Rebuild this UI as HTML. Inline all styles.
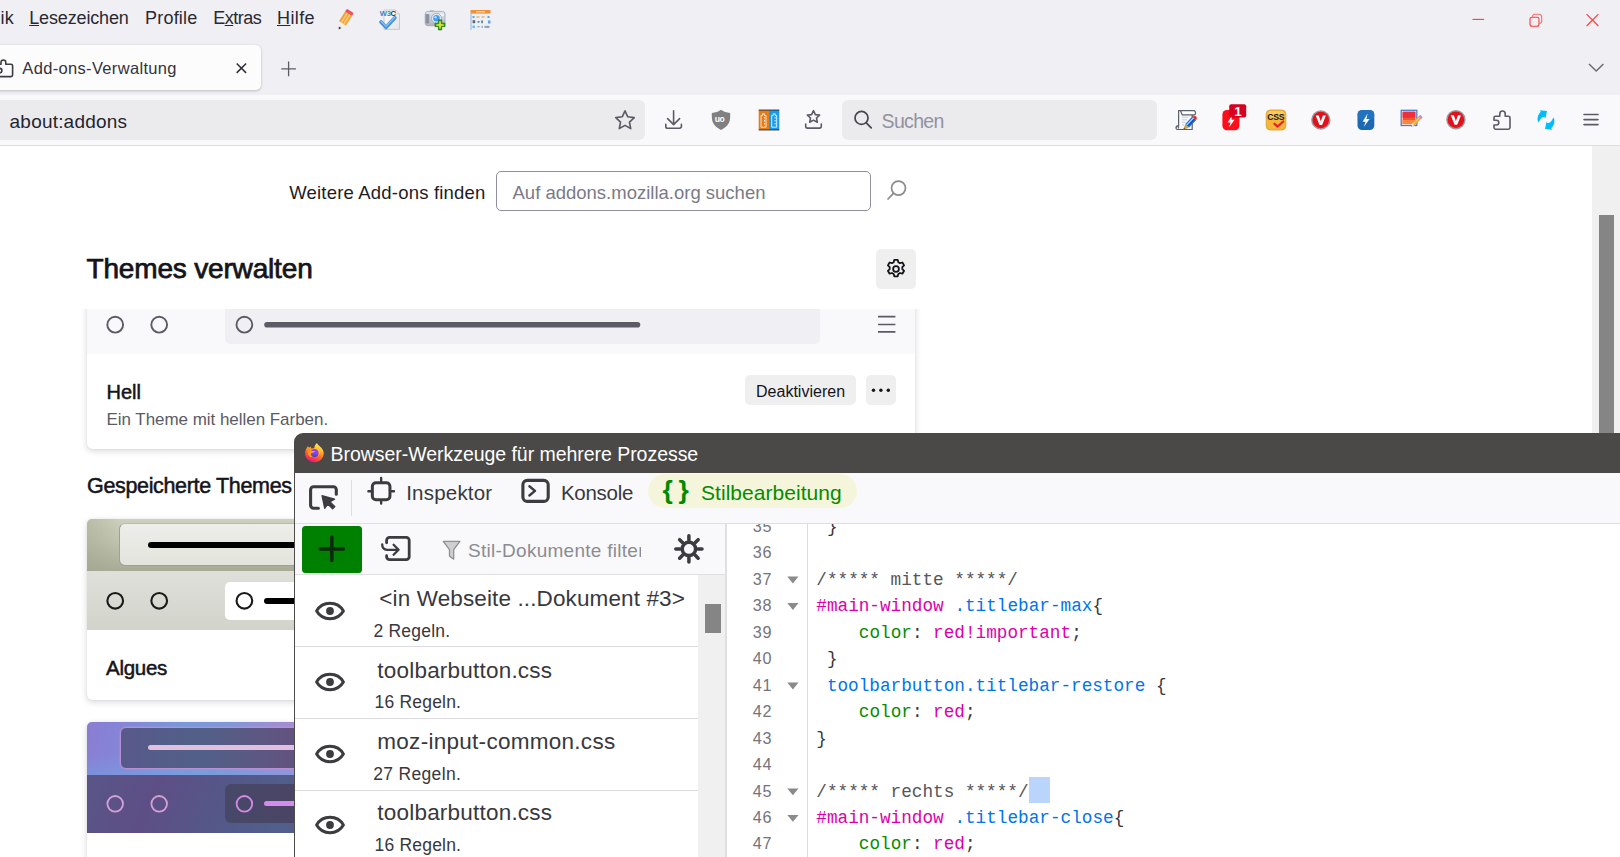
<!DOCTYPE html>
<html lang="de">
<head>
<meta charset="utf-8">
<title>Add-ons-Verwaltung</title>
<style>
html,body{margin:0;padding:0;}
body{width:1620px;height:857px;overflow:hidden;position:relative;background:#fff;font-family:"Liberation Sans",sans-serif;}
.a{position:absolute;}
.t{position:absolute;white-space:pre;line-height:1;}
svg{position:absolute;overflow:visible;}
/* browser chrome */
#titlebar{left:0;top:0;width:1620px;height:95px;background:#f0f0f4;}
#navbar{left:0;top:95px;width:1620px;height:50px;background:#f9f9fb;border-bottom:1px solid #dcdce1;}
#tab{left:-20px;top:45px;width:281px;height:45px;background:#fcfcfd;border-radius:5px;box-shadow:0 1px 3px rgba(0,0,0,.2),0 0 1px rgba(0,0,0,.14);}
#urlbar{left:-10px;top:100px;width:655px;height:40px;background:#ebebee;border-radius:6px;}
#searchbar{left:842px;top:100px;width:315px;height:40px;background:#ebebee;border-radius:6px;}
/* page */
#page{left:0;top:146px;width:1592px;height:711px;background:#fff;}
#vscroll{left:1592px;top:146px;width:28px;height:711px;background:#f0f0f0;}
#vthumb{left:1599px;top:215px;width:15px;height:230px;background:#858585;}
#amosearch{left:496px;top:171px;width:373px;height:38px;border:1px solid #8f8f9d;border-radius:5px;background:#fff;}
#gearbtn{left:876px;top:249px;width:40px;height:40px;background:#efeff0;border-radius:5px;}
.card{background:#fff;border-radius:5px;box-shadow:0 2px 6px rgba(58,57,68,.2),0 0 1px rgba(58,57,68,.22);overflow:hidden;}
#card1{left:87px;top:299px;width:828px;height:150px;}
#card2{left:87px;top:519px;width:828px;height:181px;}
#card3{left:87px;top:722px;width:828px;height:181px;}
.btn{background:#efeff0;border-radius:5px;}
/* devtools */
#dt{left:294px;top:433px;width:1340px;height:440px;background:#fff;border-radius:9px 0 0 0;overflow:hidden;}
#dttitle{left:0;top:0;width:1340px;height:40px;background:#4a4947;}
#dttabs{left:0;top:40px;width:1340px;height:50px;background:#f9f9fb;border-bottom:1px solid #dfdfe2;}
#stilpill{left:354px;top:41px;width:209px;height:34px;border-radius:17px;background:#f5f5dc;}
#sbtools{left:0;top:91px;width:431px;height:50px;background:#f9f9fb;border-bottom:1px solid #e0e0e2;}
#plusbtn{left:8px;top:93px;width:60px;height:47px;background:#008000;border-radius:3.500px;}
#sblist{left:0;top:142px;width:404px;height:300px;background:#fff;}
.row{left:0;width:404px;height:71px;border-bottom:1px solid #dcdcde;}
#sbscroll{left:404px;top:142px;width:27px;height:300px;background:#f0f0f0;}
#sbthumb{left:411px;top:171px;width:16px;height:29px;background:#858585;}
#splitter{left:431px;top:91px;width:2px;height:350px;background:#e0e0e2;}
#gutter{left:433px;top:91px;width:80px;height:350px;background:#fff;border-right:1px solid #dcdcde;}
#sel{left:735px;top:344px;width:21px;height:26px;background:#b9d5fb;}
</style>
</head>
<body>
<!-- ===== browser chrome ===== -->
<div class="a" id="titlebar"></div>
<div class="a" id="navbar"></div>
<div class="a" id="tab"></div>
<div class="a" id="urlbar"></div>
<div class="a" id="searchbar"></div>
<!-- menu-bar extension icons -->
<svg style="left:335px;top:9px" width="20" height="22" viewBox="0 0 20 22">
  <g transform="translate(-.2 -.3) rotate(32 10 11) translate(10 11) scale(1.12) translate(-10 -11.400)">
    <rect x="6.3" y="2.2" width="7.4" height="3.2" rx="1" fill="#e9545f"/>
    <rect x="6.3" y="5.2" width="7.4" height="10.2" fill="#f0a63e"/>
    <rect x="8.2" y="5.2" width="1.2" height="10.2" fill="#f6c878"/>
    <rect x="10.7" y="5.2" width="1.2" height="10.2" fill="#f6c878"/>
    <path d="M6.3 15.4h7.4L10 21.6z" fill="#f4efe6"/>
    <path d="M8.7 19.3h2.6L10 21.8z" fill="#3a3a3a"/>
  </g>
</svg>
<svg style="left:379px;top:9px" width="22" height="22" viewBox="0 0 22 22">
  <defs><linearGradient id="pg1" x1="0" y1="0" x2="1" y2="1"><stop offset="0" stop-color="#fff"/><stop offset="1" stop-color="#e4e4e6"/></linearGradient></defs>
  <path d="M5 1h11.500l4 3.800v15.600H5z" fill="url(#pg1)" stroke="#c4c4c8" stroke-width=".9"/>
  <path d="M16.500 1v3.800h4" fill="#ececee" stroke="#c4c4c8" stroke-width=".7"/>
  <text x=".7" y="6.700" font-family="'Liberation Sans',sans-serif" font-weight="700" font-size="7.600" fill="#3a86c9" letter-spacing="-.2">W3</text>
  <text x="11.500" y="6.700" font-family="'Liberation Sans',sans-serif" font-weight="700" font-size="7.600" fill="#333">C</text>
  <path d="M2 13l5.100 5.300 8.800-9.500" fill="none" stroke="#4a92db" stroke-width="3.700" stroke-linecap="round" stroke-linejoin="round"/>
  <path d="M2.200 12.500l4.900 4.800 8.500-9" fill="none" stroke="#86bdee" stroke-width="1.300" stroke-linecap="round" stroke-linejoin="round"/>
</svg>
<svg style="left:424px;top:9px" width="22" height="22" viewBox="0 0 22 22">
  <defs><linearGradient id="cam1" x1="0" y1="0" x2="0" y2="1"><stop offset="0" stop-color="#e3e6ec"/><stop offset=".55" stop-color="#c9ccd6"/><stop offset="1" stop-color="#aeb2bf"/></linearGradient></defs>
  <rect x="5.600" y=".9" width="4.600" height="3" rx="1" fill="#c2c5cf"/>
  <rect x="1.200" y="2.400" width="19.800" height="14.300" rx="2.600" fill="url(#cam1)" stroke="#a0a4b2" stroke-width=".8"/>
  <rect x="1.500" y="5" width="3.800" height="9.500" rx="1" fill="#8d92a3"/>
  <rect x="15.500" y="4.600" width="4.300" height="2.600" fill="#f1f3f7"/>
  <circle cx="12.500" cy="9.300" r="5" fill="#e6ebf3" stroke="#9aa0b0" stroke-width=".8"/>
  <circle cx="12.500" cy="9.300" r="3.300" fill="#3f9cef"/>
  <circle cx="11.500" cy="8.200" r="1.200" fill="#b5dcfb"/>
  <path d="M14.400 10.900h3.300v3.300H21v3.400h-3.300v3.300h-3.300v-3.300H11v-3.400h3.400z" fill="#32991c" stroke="#23780e" stroke-width=".8" stroke-linejoin="round"/>
  <path d="M16.050 12.300v7.300M12.400 15.900h7.300" stroke="#e6ee35" stroke-width="1.500"/>
</svg>
<svg style="left:470px;top:9px" width="22" height="22" viewBox="0 0 22 22">
  <rect x=".5" y="1" width="20" height="20" fill="#e9f1fb"/>
  <rect x=".5" y="1" width="20" height="3.6" fill="#f0913a"/>
  <rect x="6" y="2.2" width="9" height="1.2" fill="#fbd9b5"/>
  <rect x=".5" y="4.6" width="1" height="16.4" fill="#8fb5e6"/>
  <g fill="#6d9fe0"><rect x="2.5" y="7" width="2" height="2"/><rect x="17.5" y="7" width="2" height="2"/><rect x="18" y="11.5" width="2.5" height="3"/><rect x="2.5" y="16.5" width="2.4" height="2.6" fill="#7fb3ee"/></g>
  <g fill="#f3b56e"><rect x="6.5" y="7.2" width="3" height="1.6"/><rect x="11.5" y="7.2" width="3" height="1.6"/></g>
  <g fill="#5d6470"><rect x="2.6" y="11.2" width="2.6" height="3"/><rect x="7.5" y="12.2" width="2" height="1.4"/><rect x="11.3" y="11.4" width="1.5" height="2.8"/></g>
  <g fill="#9aa3b3"><rect x="7.5" y="17" width="2" height="1.4"/><rect x="11.5" y="16.8" width="1.4" height="2"/><rect x="14.5" y="16.8" width="5" height="2.2"/></g>
</svg>

<!-- window controls -->
<svg style="left:1460px;top:6px" width="150" height="28" viewBox="0 0 150 28" fill="none" stroke="#ff3a3a" stroke-width="1.1">
  <path d="M12.5 13.4h11.6"/>
  <rect x="70" y="11.3" width="9" height="9" rx="2"/>
  <path d="M72.5 11.3v-.8a2.2 2.2 0 0 1 2.2-2.2h4a3 3 0 0 1 3 3v4a2.2 2.2 0 0 1-2.2 2.2h-.5" stroke="#ff6a6a"/>
  <path d="M126.6 8.2l11.8 11.8M138.4 8.2l-11.8 11.8"/>
</svg>
<!-- tabs-list chevron -->
<svg style="left:1586px;top:60px" width="20" height="14" viewBox="0 0 20 14" fill="none" stroke="#6a6a73" stroke-width="1.5">
  <path d="M3 4l7.2 7L17.4 4"/>
</svg>

<!-- tab: puzzle favicon, close, new tab -->
<svg style="left:-8px;top:57px" width="24" height="22" viewBox="0 0 24 22" fill="none" stroke="#3c3c44" stroke-width="1.6" stroke-linejoin="round">
  <path d="M3 7.2h6V5.4a2.4 2.4 0 0 1 4.8 0v1.8h5.2a1.6 1.6 0 0 1 1.6 1.6V18a1.6 1.6 0 0 1-1.6 1.6H3"/>
  <path d="M4 11.3h3.6a2.3 2.3 0 0 1 0 4.6H4"/>
</svg>
<svg style="left:234px;top:61px" width="14" height="14" viewBox="0 0 14 14" fill="none" stroke="#2f2f37" stroke-width="1.5">
  <path d="M2.7 2.5l9.4 9.4M12.1 2.5l-9.4 9.4"/>
</svg>
<svg style="left:280px;top:60px" width="18" height="18" viewBox="0 0 18 18" fill="none" stroke="#5b5b66" stroke-width="1.3">
  <path d="M8.6 1.6v14.6M1.3 8.9h14.6"/>
</svg>

<!-- urlbar star -->
<svg style="left:613px;top:108px" width="24" height="24" viewBox="0 0 24 24" fill="none" stroke="#5b5b66" stroke-width="1.6" stroke-linejoin="round">
  <path d="M12 3.6l2.55 5.5 5.95.75-4.4 4.1 1.15 5.95L12 16.95 6.75 19.9l1.15-5.95-4.4-4.1 5.95-.75z" transform="translate(12 12.3) scale(1.09) translate(-12 -12.3)" stroke-width="1.5"/>
</svg>
<!-- downloads -->
<svg style="left:662px;top:108px" width="24" height="24" viewBox="0 0 24 24" fill="none" stroke="#5b5b66" stroke-width="1.6" stroke-linecap="round" stroke-linejoin="round">
  <path d="M11.6 2.8v13M5.6 10.6l6 6 6-6"/>
  <path d="M3.8 16.2v2.2a1.8 1.8 0 0 0 1.8 1.8h12a1.8 1.8 0 0 0 1.8-1.8v-2.2"/>
</svg>
<!-- uBlock shield -->
<svg style="left:710px;top:108px" width="22" height="24" viewBox="0 0 22 24">
  <path d="M11 1.8c-2.6 1.9-5.6 2.9-9.2 3.1 0 3.400-.2 7.200 1.500 10.400 1.500 2.900 4.200 5 7.700 6.700 3.500-1.700 6.200-3.800 7.700-6.700 1.700-3.200 1.500-7 1.500-10.400-3.600-.2-6.600-1.200-9.200-3.100z" fill="#808080"/>
  <text x="4.7" y="14.4" font-family="'Liberation Sans',sans-serif" font-weight="700" font-size="8.6" fill="#fff" letter-spacing="-.5">uo</text>
</svg>
<!-- orange / blue containers icon -->
<svg style="left:758px;top:109px" width="22" height="22" viewBox="0 0 22 22">
  <rect x=".7" y="1" width="10.3" height="20" fill="#e37d1b"/>
  <rect x="11" y="1" width="10.3" height="20" fill="#1c9bea"/>
  <rect x=".7" y=".6" width="20.600" height=".9" fill="#2a2a2a"/><rect x=".7" y="20.500" width="20.600" height=".9" fill="#2a2a2a"/>
  <g fill="none" stroke="#fbe3c9" stroke-width="1"><path d="M3 6.500h1.500V4.800h2V6.500H8v11.700H3z"/></g>
  <g fill="none" stroke="#d6efff" stroke-width="1"><path d="M13.700 6.500h1.500V4.800h2V6.500h1.500v11.700h-5z"/></g>
  <g fill="#fff" opacity=".85"><rect x="6" y="8" width="1" height="1.500"/><rect x="6" y="11" width="1" height="1.500"/><rect x="6" y="14" width="1" height="1.500"/><rect x="16.600" y="8" width="1" height="1.500"/><rect x="16.600" y="11" width="1" height="1.500"/><rect x="16.600" y="14" width="1" height="1.500"/></g>
</svg>
<!-- bookmarks (star in tray) -->
<svg style="left:802px;top:108px" width="24" height="24" viewBox="0 0 24 24" fill="none" stroke="#5b5b66" stroke-width="1.6" stroke-linecap="round" stroke-linejoin="round">
  <path d="M11.500 2.700l1.850 3.900 4.250.5-3.100 2.900.8 4.200-3.800-2.100-3.800 2.100.8-4.200-3.100-2.900 4.250-.5z"/>
  <path d="M3.700 16v2.300a1.800 1.800 0 0 0 1.800 1.800h12a1.800 1.800 0 0 0 1.800-1.800V16"/>
</svg>
<!-- search glass -->
<svg style="left:850px;top:108px" width="26" height="26" viewBox="0 0 26 26" fill="none" stroke="#45454d" stroke-width="1.7" stroke-linecap="round">
  <circle cx="11.500" cy="9.900" r="6.500"/><path d="M16.300 14.800l4.900 5.100"/>
</svg>

<!-- right-hand toolbar icons -->
<svg style="left:1170px;top:104px" width="32" height="32" viewBox="0 0 32 32">
  <path d="M8.600 6.600h15.500v4.300h-1.900v14.600H7.200c-.8-.2-1.200-1-1.200-1.900 0-1.200.8-2.100 2.600-2.100z" fill="#f7f8fb" stroke="#5b616b" stroke-width="1.200" stroke-linejoin="round"/>
  <path d="M10.400 6.600l1.900 4.300h12.100c1.400-.3 1.700-3.600-.3-4.300z" fill="#fff" stroke="#5b616b" stroke-width="1.200" stroke-linejoin="round"/>
  <path d="M6.300 24.300c.3-1.600 1.300-2.300 2.300-2.300v2.600" fill="#d9dde4" stroke="#5b616b" stroke-width="1"/>
  <g stroke="#c3c9d6" stroke-width=".9"><path d="M12 13.200h6M12 15.800h5M12 18.300h3M12 20.900h2"/></g>
  <path d="M15.300 20l7-7.400 3.700 3.600-7 7.400z" fill="#1f6fe0"/>
  <path d="M16.900 21.500l7-7.400 1.100 1.100-7 7.400z" fill="#1048b8"/>
  <path d="M16.200 20.700l7-7.400.9.900-7 7.400z" fill="#9fdcff"/>
  <path d="M22.300 12.600c1-1.200 2.500-1.300 3.600-.3 1.100 1 1.200 2.700.1 3.900z" fill="#e8261f"/>
  <path d="M23 12.300c.8-.7 1.800-.7 2.500-.2" stroke="#f6a09a" stroke-width=".9" fill="none"/>
  <path d="M15.300 20l3.700 3.600-5.800 2.300z" fill="#d0a03a"/>
  <path d="M14.100 23.800l1.300 1.300-2.400.9z" fill="#5a4312"/>
</svg>
<svg style="left:1221px;top:102px" width="28" height="30" viewBox="0 0 28 30">
  <rect x="1.400" y="8" width="17" height="20.200" rx="4.500" fill="#fa0f1b"/>
  <path d="M11.700 12.500l-5.200 8h3.100l-1.700 5 5.700-7.700h-3.200z" fill="#fff"/>
  <rect x="8.200" y="2.200" width="17" height="13.400" rx="2" fill="#d70022"/>
  <text x="13.300" y="14.200" font-family="'Liberation Sans',sans-serif" font-weight="700" font-size="13.500" fill="#fff">1</text>
</svg>
<svg style="left:1265px;top:109px" width="22" height="22" viewBox="0 0 22 22">
  <rect x="1.200" y="1" width="19.600" height="20" rx="4" fill="#f6b63a" stroke="#d99a25" stroke-width=".8"/>
  <rect x="2.500" y="2" width="17" height="6" rx="3" fill="#fbd36f" opacity=".7"/>
  <text x="2.300" y="10.600" font-family="'Liberation Sans',sans-serif" font-weight="700" font-size="8.600" fill="#1b1508" letter-spacing="-.3">CSS</text>
  <path d="M9.500 14.800l3.200 2.700 5.500-5" fill="none" stroke="#e0262b" stroke-width="2.300" stroke-linecap="round" stroke-linejoin="round"/>
</svg>
<svg style="left:1309px;top:108px" width="24" height="24" viewBox="0 0 24 24">
  <circle cx="11.800" cy="12" r="9.700" fill="#9b9b9b"/>
  <circle cx="11.800" cy="12" r="8.300" fill="#e3111c"/>
  <path d="M6.700 7.600h3l2.100 5.600 2.100-5.600h3L13.100 17h-2.600z" fill="#fff"/>
</svg>
<svg style="left:1356px;top:109px" width="20" height="22" viewBox="0 0 20 22">
  <rect x="1.500" y="1" width="16.800" height="20" rx="4.500" fill="#1c69b3"/>
  <rect x="1.500" y="1" width="16.800" height="10" rx="4.500" fill="#2a7ac6" opacity=".6"/>
  <path d="M11.600 4.500l-5 8.200h3l-1.900 5.200 5.900-7.900h-3.200z" fill="#fff"/>
</svg>
<svg style="left:1399px;top:108px" width="26" height="24" viewBox="0 0 26 24">
  <rect x="2.200" y="2.300" width="15.600" height="15.200" fill="#fff" stroke="#4d7cc9" stroke-width="1.300"/>
  <rect x="3.600" y="3.700" width="12.800" height="12.400" fill="#f2542d"/>
  <rect x="3.600" y="3.700" width="12.800" height="6" fill="#ee2f3a"/>
  <rect x="3.600" y="12" width="12.800" height="4.100" fill="#f6893a"/>
  <g transform="rotate(45 16 14.500)">
    <rect x="14.200" y="5.300" width="3.600" height="2.800" rx=".8" fill="#c98ad6"/>
    <rect x="14.200" y="7.800" width="3.600" height="9" fill="#f2a23a"/>
    <rect x="15.300" y="7.800" width="1" height="9" fill="#f8cc80"/>
    <path d="M14.200 16.800h3.600l-1.800 3.500z" fill="#f4e3c3"/>
    <path d="M15.400 19h1.200l-.6 1.400z" fill="#444"/>
  </g>
</svg>
<svg style="left:1444px;top:108px" width="24" height="24" viewBox="0 0 24 24">
  <circle cx="11.900" cy="11.700" r="9.700" fill="#9b9b9b"/>
  <circle cx="11.900" cy="11.700" r="8.300" fill="#e3111c"/>
  <path d="M6.800 7.300h3l2.100 5.600 2.100-5.600h3l-3.800 9.400h-2.600z" fill="#fff"/>
</svg>
<!-- extensions puzzle -->
<svg style="left:1490px;top:108px" width="24" height="24" viewBox="0 0 24 24" fill="none" stroke="#5b5b66" stroke-width="1.600" stroke-linejoin="round">
  <path d="M6 21.200h12.400a1.600 1.600 0 0 0 1.600-1.600V9.800a1.600 1.600 0 0 0-1.600-1.600h-3.200V5.700a2.700 2.700 0 0 0-5.400 0v2.500H5.600A1.600 1.600 0 0 0 4 9.800v2.400h2.400a2.400 2.400 0 0 1 0 4.800H4v2.600a1.600 1.600 0 0 0 1.600 1.600z"/>
</svg>
<!-- sync arrows -->
<svg style="left:1530px;top:104px" width="32" height="32" viewBox="0 0 32 32" fill="#02bdfb">
  <path id="syA" d="M8.400 18.600C7 16 7.200 12.200 9.900 8.800l.9-1.100-.9-1.500L17 7.100l-1.500 7.100-.8-1.100c-1.700-.700-3.700.500-5 3.300z"/>
  <path d="M8.400 18.600C7 16 7.200 12.200 9.900 8.800l.9-1.100-.9-1.500L17 7.100l-1.500 7.100-.8-1.100c-1.700-.700-3.700.500-5 3.300z" transform="rotate(180 16 16)"/>
</svg>
<!-- app menu -->
<svg style="left:1582px;top:112px" width="18" height="16" viewBox="0 0 18 16" fill="none" stroke="#5b5b66" stroke-width="1.600" stroke-linecap="round">
  <path d="M2 2.500h14M2 7.600h14M2 12.600h14"/>
</svg>


<!-- ===== about:addons page ===== -->
<div class="a" id="page"></div>
<div class="a" id="vscroll"></div>
<div class="a" id="vthumb"></div>
<div class="a" id="amosearch"></div>
<div class="a" id="gearbtn"></div>
<div class="a card" id="card1">
  <div class="a" style="left:0;top:0;width:828px;height:55px;background:#f9f9fb;"></div>
  <div class="a" style="left:138px;top:0;width:595px;height:45px;background:#f0f0f4;border-radius:5px;"></div>
</div>
<div class="a" style="left:70px;top:290px;width:870px;height:19px;background:#fff;"></div>
<div class="a btn" style="left:745px;top:375px;width:111px;height:30px;"></div>
<div class="a btn" style="left:866px;top:375px;width:30px;height:30px;"></div>
<div class="a card" id="card2">
  <div class="a" style="left:0;top:0;width:828px;height:52px;background:linear-gradient(180deg,#cdd0bc 0%,#c0c3ae 45%,#a8ab96 100%);"></div>
  <div class="a" style="left:0;top:0;width:34px;height:52px;background:linear-gradient(90deg,rgba(160,163,140,.45),rgba(160,163,140,0));"></div>
  <div class="a" style="left:32px;top:4px;width:500px;height:43px;background:linear-gradient(180deg,#edeee9,#e3e4dd);border:1px solid #9fa195;border-top-color:#b9bbad;border-radius:6px;box-sizing:border-box;"></div>
  <div class="a" style="left:61px;top:23px;width:400px;height:5.600px;border-radius:3px;background:#000;"></div>
  <div class="a" style="left:0;top:52px;width:828px;height:58.500px;background:linear-gradient(180deg,#dfe0d9,#d2d3cb);"></div>
  <div class="a" style="left:138px;top:62.500px;width:500px;height:38.500px;background:#fff;border-radius:5px;"></div>
  <div class="a" style="left:177px;top:79px;width:300px;height:5.600px;border-radius:3px;background:#000;"></div>
</div>
<div class="a card" id="card3">
  <div class="a" style="left:0;top:0;width:828px;height:52.500px;background:linear-gradient(97deg,#8a7dd2 0px,#8486d7 38px,#789ad9 100px,#7f97d8 140px,#9a8fd4 185px,#b08ad2 225px);"></div>
  <div class="a" style="left:0;top:0;width:250px;height:52.500px;background:linear-gradient(180deg,rgba(122,160,222,0) 60%,rgba(118,160,225,.55) 100%);"></div>
  <div class="a" style="left:33px;top:5px;width:500px;height:41.500px;background:linear-gradient(90deg,#58598a 0%,#516087 45%,#63527f 100%);background-size:176px 100%;background-repeat:repeat-x;border:1px solid #b98fd4;border-radius:6px;box-sizing:border-box;box-shadow:0 0 2px rgba(215,150,230,.7);"></div>
  <div class="a" style="left:61px;top:23.300px;width:400px;height:4.900px;border-radius:3px;background:#dfc0de;"></div>
  <div class="a" style="left:0;top:52.500px;width:828px;height:58.300px;background:linear-gradient(115deg,#595587 0%,#5d4f86 22%,#525a89 50%,#505f8b 62%,#5c588a 100%);background-size:320px 100%;"></div>
  <div class="a" style="left:138px;top:62px;width:500px;height:39.200px;background:linear-gradient(90deg,#474868,#4b4465 80px);border-radius:6px;"></div>
  <div class="a" style="left:177px;top:79.400px;width:300px;height:4.800px;border-radius:3px;background:#d68bea;"></div>
</div>
<!-- AMO search glass -->
<svg style="left:884px;top:176px" width="26" height="28" viewBox="0 0 26 28" fill="none" stroke="#8a8a8f" stroke-width="1.700" stroke-linecap="round">
  <circle cx="14.500" cy="12.100" r="7"/><path d="M9.400 17.400l-5.400 5.600"/>
</svg>
<!-- gear in button -->
<svg style="left:884px;top:257px" width="24" height="24" viewBox="0 0 24 24" fill="none" stroke="#15141a" stroke-width="1.800" stroke-linejoin="round">
  <path d="M10.300 2.800h3.400l.6 2.400 1.700 1 2.400-.7 1.700 2.900-1.800 1.700v2l1.800 1.700-1.700 2.900-2.400-.7-1.700 1-.6 2.400h-3.400l-.6-2.400-1.700-1-2.400.7-1.700-2.900 1.800-1.700v-2L3.900 8.400l1.700-2.900 2.400.7 1.700-1z" stroke-linejoin="round"/>
  <circle cx="12" cy="12" r="2.900"/>
</svg>
<!-- card 1 (Hell) preview -->
<svg style="left:87px;top:309px" width="828" height="45" viewBox="0 0 828 45" fill="none" stroke="#5b5b66" stroke-width="1.900">
  <circle cx="28.200" cy="15.700" r="7.900"/><circle cx="72.200" cy="15.700" r="7.900"/><circle cx="157.400" cy="15.700" r="7.900"/>
  <path d="M180 15.700h370.500" stroke-width="5.600" stroke-linecap="round"/>
  <path d="M791 7.700h17.400M791 15.500h17.400M791 22.900h17.400" stroke-width="1.700"/>
</svg>
<!-- more (...) dots -->
<svg style="left:866px;top:375px" width="30" height="30" viewBox="0 0 30 30" fill="#15141a">
  <circle cx="7.500" cy="15.200" r="1.700"/><circle cx="14.900" cy="15.200" r="1.700"/><circle cx="22.300" cy="15.200" r="1.700"/>
</svg>
<!-- card 2 (Algues) circles -->
<svg style="left:87px;top:571px" width="300" height="58" viewBox="0 0 300 58" fill="none" stroke="#1a1a1a" stroke-width="2.100">
  <circle cx="28.200" cy="29.800" r="7.850"/><circle cx="72.200" cy="29.800" r="7.850"/><circle cx="157.400" cy="29.800" r="7.850"/>
</svg>
<!-- card 3 (Alpenglow) circles -->
<svg style="left:87px;top:775px" width="300" height="58" viewBox="0 0 300 58" fill="none" stroke="#d4a0d8" stroke-width="1.800">
  <circle cx="28.200" cy="28.800" r="7.800"/><circle cx="72.200" cy="28.800" r="7.800"/><circle cx="157.400" cy="28.800" r="7.800" stroke="#d58ae3"/>
</svg>


<!-- ===== devtools window ===== -->
<div class="a" id="dt">
  <div class="a" id="dttitle"></div>
  <div class="a" id="dttabs"></div>
  <div class="a" id="stilpill"></div>
  <div class="a" id="sbtools"></div>
  <div class="a" id="plusbtn"></div>
  <div class="a" id="sblist">
    <div class="a row" style="top:0;"></div>
    <div class="a row" style="top:72px;"></div>
    <div class="a row" style="top:144px;"></div>
    <div class="a row" style="top:216px;"></div>
  </div>
  <div class="a" id="sbscroll"></div>
  <div class="a" id="sbthumb"></div>
  <div class="a" id="splitter"></div>
  <div class="a" id="gutter"></div>
  <div class="a" id="sel"></div>
  <!-- firefox logo -->
<svg style="left:10.600px;top:9.800px" width="20" height="20" viewBox="0 0 20 20">
  <defs>
    <linearGradient id="ffg" x1=".8" y1="0" x2=".35" y2="1"><stop offset="0" stop-color="#fff36b"/><stop offset=".28" stop-color="#ffc532"/><stop offset=".55" stop-color="#ff7d22"/><stop offset=".8" stop-color="#ff3b45"/><stop offset="1" stop-color="#e3148c"/></linearGradient>
    <linearGradient id="ffp" x1=".5" y1="0" x2=".4" y2="1"><stop offset="0" stop-color="#b336e4"/><stop offset=".5" stop-color="#7b4cf0"/><stop offset="1" stop-color="#4a3cc4"/></linearGradient>
    <linearGradient id="ffo" x1="0" y1="0" x2="1" y2="1"><stop offset="0" stop-color="#ff8a16"/><stop offset="1" stop-color="#ffb52a"/></linearGradient>
  </defs>
  <path d="M11.900 0c1 1.700 2.300 2.700 3.600 3.900 1.900 1.700 3.200 3.900 3.200 6.400 0 5-4.100 9-9.300 9S.1 15.400.1 10.500c0-2.200.6-4.300 1.700-5.800l.9-1.500 1.500 1.500 1.300-1.200 1.200 2.200c.8-.3 1.700-.4 2.500-.3C9.200 3.400 10.300 1.400 11.900 0z" fill="url(#ffg)"/>
  <circle cx="9.500" cy="9.900" r="4" fill="url(#ffp)"/>
  <path d="M2.300 7.200c1.300-.5 2.800-.2 3.900.4.900.5 1.800.5 2.900.5.700 0 .9.500.3.800-1.400.6-2.800.7-3.400 1.700-.7 1.200.2 2.700 1.600 3.300-2.500.4-5-1.300-5.300-6.700z" fill="url(#ffo)"/>
  <path d="M11.400 5.800c1.600.7 2.700 2.200 2.700 4.100 0 .9-.3 1.800-.8 2.500 1.800-1.400 2-4.500-.100-6.500-.5-.4-1.100-.3-1.800-.1z" fill="#ffd23a" opacity=".9"/>
</svg>
<!-- element picker -->
<svg style="left:14px;top:51px" width="32" height="28" viewBox="0 0 32 28" fill="none" stroke="#3b3b40" stroke-width="3.100" stroke-linecap="round" stroke-linejoin="round">
  <path d="M10.400 24.200H5.600a3 3 0 0 1-3-3V5.800a3 3 0 0 1 3-3h19.700a3 3 0 0 1 3 3v4.400"/>
  <path d="M14 11.600l2.700 12.800 3.100-4.300 4.800 4.800 2.300-2.300-4.800-4.800 4.500-2.600z" fill="#3b3b40" stroke-width="1.200"/>
</svg>
<div class="a" style="left:57px;top:47px;width:1px;height:36px;background:#dedee1;"></div>
<!-- inspector -->
<svg style="left:72px;top:42px" width="30" height="32" viewBox="0 0 30 32" fill="none" stroke="#3b3b40" stroke-width="3" stroke-linecap="round">
  <rect x="6.350" y="7.650" width="17.600" height="17.200" rx="3.600"/>
  <path d="M15.150 3v3.400M15.150 25.600v3M2.400 16.200h3.400M24.600 16.200h3.400" stroke-width="2.400"/>
</svg>
<!-- console -->
<svg style="left:226px;top:44px" width="32" height="28" viewBox="0 0 32 28" fill="none" stroke="#3b3b40" stroke-width="3.100" stroke-linecap="round" stroke-linejoin="round">
  <rect x="2.900" y="3.400" width="25.300" height="21" rx="4.400"/>
  <path d="M9.400 9.300l5.600 4.600-5.600 4.600" stroke-width="2.400"/>
</svg>
<!-- plus glyph -->
<svg style="left:8px;top:93px" width="60" height="47" viewBox="0 0 60 47" fill="none" stroke="#0b2c0b" stroke-width="3.600" stroke-linecap="round">
  <path d="M29.800 11.300v23.200M18.200 22.900h23.200"/>
</svg>
<!-- import -->
<svg style="left:85px;top:101px" width="34" height="30" viewBox="0 0 34 30" fill="none" stroke="#3b3b40" stroke-width="2.800" stroke-linecap="round" stroke-linejoin="round">
  <path d="M7.600 8.800V6.300a3 3 0 0 1 3-3h16.600a3 3 0 0 1 3 3v16.400a3 3 0 0 1-3 3H10.600a3 3 0 0 1-3-3v-1" />
  <path d="M3.200 10.300c0 3.500 1.600 5.500 5 5.500h11.200M14.600 10.800l5 5-5 5" stroke-width="2.300"/>
</svg>
<!-- filter funnel -->
<svg style="left:147px;top:106px" width="22" height="24" viewBox="0 0 22 24">
  <path d="M2.300 2.400h16.600l-6.200 8.300v9.400l-4.200-2.900v-6.500z" fill="#cfcfd2" stroke="#8f8f94" stroke-width="1.300" stroke-linejoin="round"/>
</svg>
<!-- options gear (sun shaped) -->
<svg style="left:379px;top:100px" width="32" height="32" viewBox="0 0 32 32" fill="none" stroke="#3b3b40" stroke-linecap="round">
  <circle cx="15.900" cy="15.900" r="6.700" stroke-width="3.500"/>
  <g stroke-width="3.500"><path d="M15.900 2.800v4.400M15.900 24.600V29M2.800 15.900h4.400M24.600 15.900H29M6.640 6.640l3.100 3.100M22.060 22.060l3.100 3.100M6.640 25.160l3.100-3.100M22.060 9.740l3.100-3.100"/></g>
</svg>
<!-- eye icons -->
<svg style="left:20px;top:167px" width="32" height="22" viewBox="0 0 32 22"><path d="M2.600 11C5.600 5.800 10.400 3.300 16 3.300S26.400 5.800 29.400 11C26.400 16.200 21.600 18.700 16 18.700S5.600 16.200 2.600 11z" fill="none" stroke="#3b3b40" stroke-width="3" stroke-linejoin="round"/><circle cx="16" cy="11" r="3.900" fill="#3b3b40"/></svg>
<svg style="left:20px;top:238px" width="32" height="22" viewBox="0 0 32 22"><path d="M2.600 11C5.600 5.800 10.400 3.300 16 3.300S26.400 5.800 29.400 11C26.400 16.200 21.600 18.700 16 18.700S5.600 16.200 2.600 11z" fill="none" stroke="#3b3b40" stroke-width="3" stroke-linejoin="round"/><circle cx="16" cy="11" r="3.900" fill="#3b3b40"/></svg>
<svg style="left:20px;top:310px" width="32" height="22" viewBox="0 0 32 22"><path d="M2.600 11C5.600 5.800 10.400 3.300 16 3.300S26.400 5.800 29.400 11C26.400 16.200 21.600 18.700 16 18.700S5.600 16.200 2.600 11z" fill="none" stroke="#3b3b40" stroke-width="3" stroke-linejoin="round"/><circle cx="16" cy="11" r="3.900" fill="#3b3b40"/></svg>
<svg style="left:20px;top:381px" width="32" height="22" viewBox="0 0 32 22"><path d="M2.600 11C5.600 5.800 10.400 3.300 16 3.300S26.400 5.800 29.400 11C26.400 16.200 21.600 18.700 16 18.700S5.600 16.200 2.600 11z" fill="none" stroke="#3b3b40" stroke-width="3" stroke-linejoin="round"/><circle cx="16" cy="11" r="3.900" fill="#3b3b40"/></svg>
<!-- fold arrows (lines 37,38,41,45,46) -->
<svg style="left:493px;top:91px" width="14" height="350" viewBox="0 0 14 350" fill="#8a8a8c">
  <path d="M.3 52.600h11.200l-5.600 6.900z"/><path d="M.3 79.100h11.200l-5.600 6.900z"/><path d="M.3 158.500h11.200l-5.600 6.900z"/><path d="M.3 264.400h11.200l-5.600 6.900z"/><path d="M.3 290.900h11.200l-5.600 6.900z"/>
</svg>

  <div class="a" style="left:0;top:20px;width:1px;height:420px;background:#4d4c4a;"></div>
</div>

<!-- ===== text ===== -->
<span class="t" style="left:0.5px;top:9px;font-size:18px;color:#2a2931;letter-spacing:0.15px;">ik</span>
<span class="t" style="left:29.2px;top:9px;font-size:18px;color:#2a2931;letter-spacing:-0.14px;"><u>L</u>esezeichen</span>
<span class="t" style="left:145.0px;top:9px;font-size:18px;color:#2a2931;letter-spacing:0.21px;">Profile</span>
<span class="t" style="left:213.2px;top:9px;font-size:18px;color:#2a2931;letter-spacing:-0.50px;">E<u>x</u>tras</span>
<span class="t" style="left:277.0px;top:9px;font-size:18px;color:#2a2931;letter-spacing:0.40px;"><u>H</u>ilfe</span>
<span class="t" style="left:22.3px;top:60px;font-size:16.5px;color:#34333b;letter-spacing:0.33px;">Add-ons-Verwaltung</span>
<span class="t" style="left:9.6px;top:112px;font-size:19px;color:#25242c;letter-spacing:0.20px;">about:addons</span>
<span class="t" style="left:881.6px;top:112px;font-size:19.5px;color:#9292a0;letter-spacing:-0.69px;">Suchen</span>
<span class="t" style="left:289.2px;top:184px;font-size:18.5px;color:#1d1c24;letter-spacing:0.20px;">Weitere Add-ons finden</span>
<span class="t" style="left:512.5px;top:184px;font-size:18.5px;color:#7a7a86;">Auf addons.mozilla.org suchen</span>
<span class="t" style="left:86.5px;top:255px;font-size:28px;color:#15141a;letter-spacing:-0.17px;-webkit-text-stroke:0.75px currentColor;">Themes verwalten</span>
<span class="t" style="left:106.6px;top:382px;font-size:20px;color:#15141a;letter-spacing:-0.06px;-webkit-text-stroke:0.5px currentColor;">Hell</span>
<span class="t" style="left:106.5px;top:411px;font-size:17px;color:#5b5b66;letter-spacing:-0.04px;">Ein Theme mit hellen Farben.</span>
<span class="t" style="left:756.0px;top:384px;font-size:16px;color:#15141a;letter-spacing:0.01px;">Deaktivieren</span>
<span class="t" style="left:87.0px;top:476px;font-size:21.5px;color:#15141a;letter-spacing:-0.34px;-webkit-text-stroke:0.5px currentColor;">Gespeicherte Themes</span>
<span class="t" style="left:106.0px;top:658px;font-size:20.5px;color:#15141a;letter-spacing:-0.28px;-webkit-text-stroke:0.5px currentColor;">Algues</span>
<span class="t" style="left:330.5px;top:445px;font-size:19.5px;color:#ffffff;letter-spacing:-0.04px;">Browser-Werkzeuge für mehrere Prozesse</span>
<span class="t" style="left:406.2px;top:483px;font-size:20.5px;color:#38383d;letter-spacing:0.21px;">Inspektor</span>
<span class="t" style="left:561.0px;top:483px;font-size:20.5px;color:#38383d;letter-spacing:-0.30px;">Konsole</span>
<span class="t" style="left:662.5px;top:477px;font-size:26.5px;color:#008a00;letter-spacing:5.68px;font-weight:700;">{}</span>
<span class="t" style="left:701.0px;top:482px;font-size:21px;color:#058b00;letter-spacing:0.04px;">Stilbearbeitung</span>
<span class="t" style="left:468.0px;top:541px;font-size:19px;color:#8c8c90;letter-spacing:0.27px;width:172.5px;overflow:hidden;">Stil-Dokumente filtern</span>
<span class="t" style="left:379.3px;top:588px;font-size:22.5px;color:#38383d;letter-spacing:0.12px;">&lt;in Webseite ...Dokument #3&gt;</span>
<span class="t" style="left:373.4px;top:623px;font-size:17.5px;color:#38383d;letter-spacing:0.23px;">2 Regeln.</span>
<span class="t" style="left:377.3px;top:660px;font-size:22.5px;color:#38383d;letter-spacing:0.21px;">toolbarbutton.css</span>
<span class="t" style="left:374.6px;top:694px;font-size:17.5px;color:#38383d;letter-spacing:0.19px;">16 Regeln.</span>
<span class="t" style="left:377.3px;top:731px;font-size:22.5px;color:#38383d;letter-spacing:0.28px;">moz-input-common.css</span>
<span class="t" style="left:373.2px;top:766px;font-size:17.5px;color:#38383d;letter-spacing:0.33px;">27 Regeln.</span>
<span class="t" style="left:377.3px;top:802px;font-size:22.5px;color:#38383d;letter-spacing:0.21px;">toolbarbutton.css</span>
<span class="t" style="left:374.6px;top:837px;font-size:17.5px;color:#38383d;letter-spacing:0.19px;">16 Regeln.</span>
<span class="t" style="left:752.8px;top:518px;font-size:16.2px;color:#74747a;letter-spacing:0.79px;">35</span>
<span class="t" style="left:752.8px;top:544px;font-size:16.2px;color:#74747a;letter-spacing:0.79px;">36</span>
<span class="t" style="left:752.8px;top:571px;font-size:16.2px;color:#74747a;letter-spacing:0.79px;">37</span>
<span class="t" style="left:752.8px;top:597px;font-size:16.2px;color:#74747a;letter-spacing:0.79px;">38</span>
<span class="t" style="left:752.8px;top:624px;font-size:16.2px;color:#74747a;letter-spacing:0.79px;">39</span>
<span class="t" style="left:752.8px;top:650px;font-size:16.2px;color:#74747a;letter-spacing:0.79px;">40</span>
<span class="t" style="left:752.8px;top:677px;font-size:16.2px;color:#74747a;letter-spacing:0.79px;">41</span>
<span class="t" style="left:752.8px;top:703px;font-size:16.2px;color:#74747a;letter-spacing:0.79px;">42</span>
<span class="t" style="left:752.8px;top:730px;font-size:16.2px;color:#74747a;letter-spacing:0.79px;">43</span>
<span class="t" style="left:752.8px;top:756px;font-size:16.2px;color:#74747a;letter-spacing:0.79px;">44</span>
<span class="t" style="left:752.8px;top:783px;font-size:16.2px;color:#74747a;letter-spacing:0.79px;">45</span>
<span class="t" style="left:752.8px;top:809px;font-size:16.2px;color:#74747a;letter-spacing:0.79px;">46</span>
<span class="t" style="left:752.8px;top:835px;font-size:16.2px;color:#74747a;letter-spacing:0.79px;">47</span>
<span class="t" style="left:826.9px;top:519px;font-size:17.7px;color:#38383d;font-family:'Liberation Mono', monospace;">}</span>
<span class="t" style="left:816.3px;top:572px;font-size:17.7px;color:#55555a;font-family:'Liberation Mono', monospace;">/***** mitte *****/</span>
<span class="t" style="left:816.3px;top:598px;font-size:17.7px;color:#dd00a9;font-family:'Liberation Mono', monospace;">#main-window</span>
<span class="t" style="left:954.4px;top:598px;font-size:17.7px;color:#0074e8;font-family:'Liberation Mono', monospace;">.titlebar-max</span>
<span class="t" style="left:1092.4px;top:598px;font-size:17.7px;color:#38383d;font-family:'Liberation Mono', monospace;">{</span>
<span class="t" style="left:858.8px;top:625px;font-size:17.7px;color:#058b00;font-family:'Liberation Mono', monospace;">color</span>
<span class="t" style="left:911.9px;top:625px;font-size:17.7px;color:#38383d;font-family:'Liberation Mono', monospace;">:</span>
<span class="t" style="left:933.1px;top:625px;font-size:17.7px;color:#dd00a9;font-family:'Liberation Mono', monospace;">red!important</span>
<span class="t" style="left:1071.2px;top:625px;font-size:17.7px;color:#38383d;font-family:'Liberation Mono', monospace;">;</span>
<span class="t" style="left:826.9px;top:651px;font-size:17.7px;color:#38383d;font-family:'Liberation Mono', monospace;">}</span>
<span class="t" style="left:826.9px;top:678px;font-size:17.7px;color:#0074e8;font-family:'Liberation Mono', monospace;">toolbarbutton.titlebar-restore</span>
<span class="t" style="left:1156.1px;top:678px;font-size:17.7px;color:#38383d;font-family:'Liberation Mono', monospace;">{</span>
<span class="t" style="left:858.8px;top:704px;font-size:17.7px;color:#058b00;font-family:'Liberation Mono', monospace;">color</span>
<span class="t" style="left:911.9px;top:704px;font-size:17.7px;color:#38383d;font-family:'Liberation Mono', monospace;">:</span>
<span class="t" style="left:933.1px;top:704px;font-size:17.7px;color:#dd00a9;font-family:'Liberation Mono', monospace;">red</span>
<span class="t" style="left:965.0px;top:704px;font-size:17.7px;color:#38383d;font-family:'Liberation Mono', monospace;">;</span>
<span class="t" style="left:816.3px;top:731px;font-size:17.7px;color:#38383d;font-family:'Liberation Mono', monospace;">}</span>
<span class="t" style="left:816.3px;top:784px;font-size:17.7px;color:#55555a;font-family:'Liberation Mono', monospace;">/***** rechts *****/</span>
<span class="t" style="left:816.3px;top:810px;font-size:17.7px;color:#dd00a9;font-family:'Liberation Mono', monospace;">#main-window</span>
<span class="t" style="left:954.4px;top:810px;font-size:17.7px;color:#0074e8;font-family:'Liberation Mono', monospace;">.titlebar-close</span>
<span class="t" style="left:1113.7px;top:810px;font-size:17.7px;color:#38383d;font-family:'Liberation Mono', monospace;">{</span>
<span class="t" style="left:858.8px;top:836px;font-size:17.7px;color:#058b00;font-family:'Liberation Mono', monospace;">color</span>
<span class="t" style="left:911.9px;top:836px;font-size:17.7px;color:#38383d;font-family:'Liberation Mono', monospace;">:</span>
<span class="t" style="left:933.1px;top:836px;font-size:17.7px;color:#dd00a9;font-family:'Liberation Mono', monospace;">red</span>
<span class="t" style="left:965.0px;top:836px;font-size:17.7px;color:#38383d;font-family:'Liberation Mono', monospace;">;</span>
<div class="a" style="left:727px;top:508px;width:900px;height:15px;background:#f9f9fb;border-bottom:1px solid #dfdfe2;"></div>
</body>
</html>
